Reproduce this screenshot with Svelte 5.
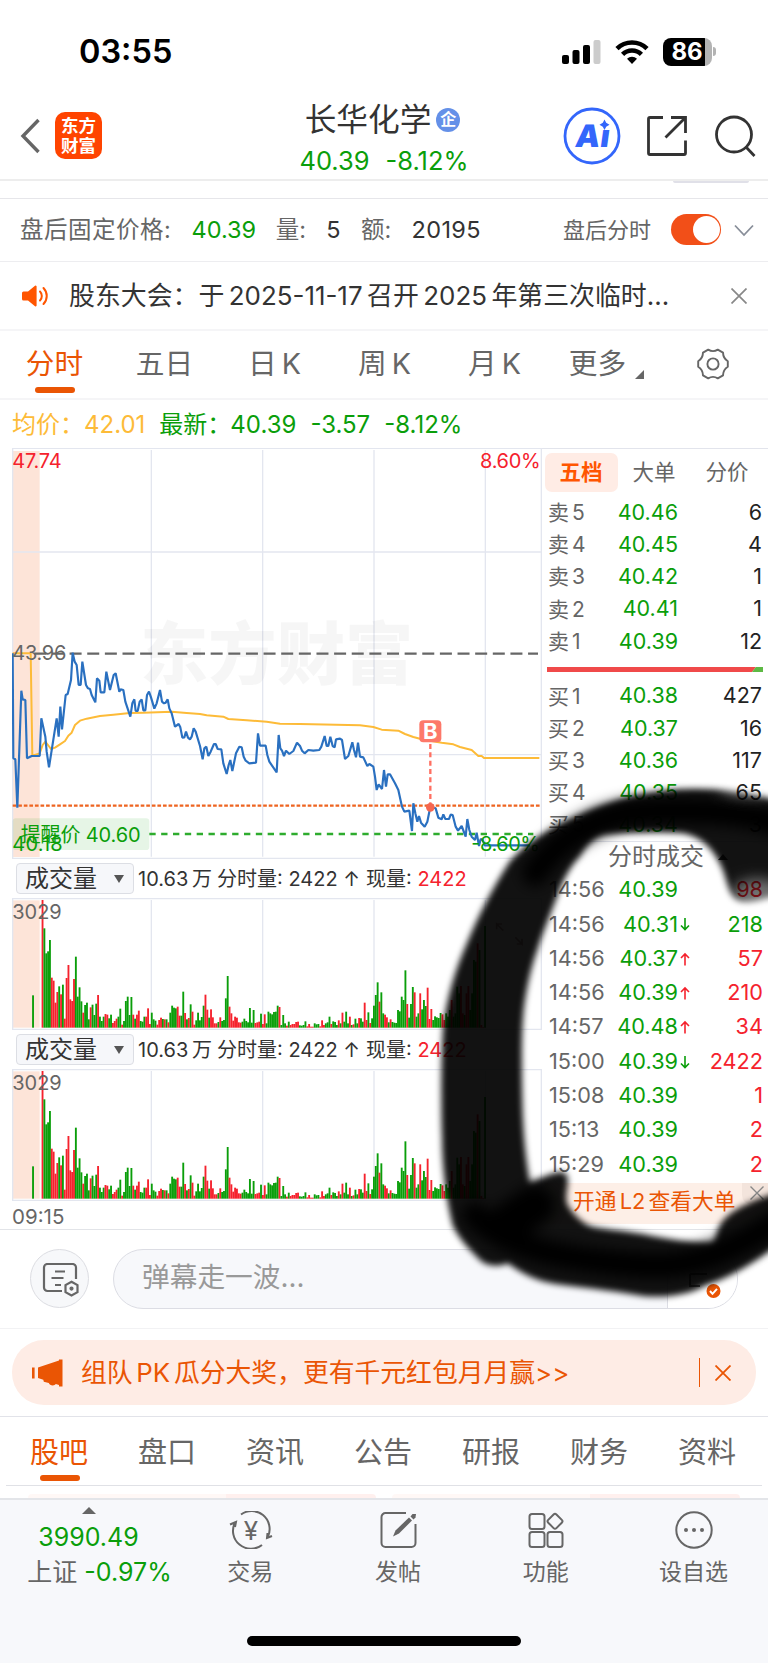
<script lang="ts">
  type Point = [number, number];

  const periods = ['分时', '五日', '日 K', '周 K', '月 K'];
  const sections = ['股吧', '盘口', '资讯', '公告', '研报', '财务', '资料'];

  const asks = [
    { name: '卖 5', price: '40.46', qty: 6 },
    { name: '卖 4', price: '40.45', qty: 4 },
    { name: '卖 3', price: '40.42', qty: 1 },
    { name: '卖 2', price: '40.41', qty: 1 },
    { name: '卖 1', price: '40.39', qty: 12 },
  ];

  const bids = [
    { name: '买 1', price: '40.38', qty: 427 },
    { name: '买 2', price: '40.37', qty: 16 },
    { name: '买 3', price: '40.36', qty: 117 },
    { name: '买 4', price: '40.35', qty: 65 },
    { name: '买 5', price: '40.34', qty: 3 },
  ];

  const trades = [
    { time: '14:56', price: '40.39', dir: '', qty: 98, color: 'red' },
    { time: '14:56', price: '40.31', dir: 'down', qty: 218, color: 'green' },
    { time: '14:56', price: '40.37', dir: 'up', qty: 57, color: 'red' },
    { time: '14:56', price: '40.39', dir: 'up', qty: 210, color: 'red' },
    { time: '14:57', price: '40.48', dir: 'up', qty: 34, color: 'red' },
    { time: '15:00', price: '40.39', dir: 'down', qty: 2422, color: 'red' },
    { time: '15:08', price: '40.39', dir: '', qty: 1, color: 'red' },
    { time: '15:13', price: '40.39', dir: '', qty: 2, color: 'red' },
    { time: '15:29', price: '40.39', dir: '', qty: 2, color: 'red' },
  ];

  // chart units are thirds of a css pixel
  const priceMorning =
    '38,40 40,355 46,358 52,503 64,152 68,178 76,180 81,355 95,348 119,348 124,235 136,290 140,335 147,382 170,235 176,290 181,200 186,268 197,165 203,162 213,120 218,38 224,65 230,75 236,135 242,135 247,65 258,135 264,145 270,147 275,165 286,187 291,115 298,122 302,157 313,157 319,95 330,150 341,105 347,100 358,155 362,148 370,150 376,185 391,230 397,190 403,178 407,213 413,213 419,185 425,178 430,211 436,211 441,165 447,155 453,172 463,206 470,190 480,150 486,185 492,190 497,188 503,178 508,205 515,220 525,260 536,252 541,262 547,293 553,292 558,275 564,293 570,298 575,290 581,265 587,275 600,318 608,358 613,325 619,320 625,348 632,335 642,312 647,312 653,327 664,328 670,370 680,402 686,375 691,360 697,393 708,340 718,320 725,322 731,350 737,362 748,370 768,368 774,280 780,317 797,317 802,345 808,365 830,397 836,285 841,325';
  const priceAfternoon =
    '6,332 12,348 18,332 28,342 40,333 51,308 60,318 66,332 74,340 85,330 100,332 118,330 124,320 134,288 140,318 145,318 151,290 158,318 164,322 168,298 180,296 186,300 195,357 205,348 217,307 222,330 228,352 234,308 240,350 250,352 262,378 268,372 280,380 285,410 290,450 296,433 306,447 312,390 318,440 323,403 330,403 345,430 355,450 366,500 373,515 388,512 396,573 400,490 406,520 412,545 417,528 423,548 434,560 442,545 451,500 467,505 475,533 485,538 490,523 496,537 507,537 512,524 518,525 527,560 534,572 545,558 557,590 562,537 568,570 575,590 585,600 590,578 597,618 602,597 608,600 614,616 750,616';
  const averageMorning =
    '38,40 92,40 97,347 119,340 128,315 136,305 144,315 153,327 165,323 180,313 195,303 205,287 215,278 225,255 240,242 260,236 300,228 340,224 390,219 430,218 515,215 560,219 600,222 620,226 670,230 685,237 740,241 800,245 840,251';
  const averageAfternoon =
    '60,252 240,256 280,261 305,269 355,272 375,282 400,291 420,296 450,302 485,308 520,313 540,321 575,330 595,348 605,348 612,354 778,354';

  function parse(points: string, shift: number): Point[] {
    return points.split(' ').map((p) => {
      const [x, y] = p.split(',').map(Number);
      return [x + shift, y] as Point;
    });
  }

  function join(morning: string, afternoon: string) {
    return [...parse(morning, 0), ...parse(afternoon, 840)].map((p) => p.join(',')).join(' ');
  }

  const priceLine = join(priceMorning, priceAfternoon);
  const averageLine = join(averageMorning, averageAfternoon);

  // r = up minute, g = down minute, number = top of the bar
  const volumeMorning =
    'r150 g235 g310 g304 g270 r383 r392 r458 r426 g409 r433 g404 r506 r384 r345 r448 r453 r387 g320 g440 g412 g454 r488 g465 g458 g508 r472 g464 g495 g461 r435 g500 g513 g500 r492 r494 g505 g494 r519 r513 r506 g500 g476 r524 g513 g453 g440 g495 g441 r494 g506 r494 r482 g513 g515 g500 r500 r475 r522 g488 g508 g512 r524 r510 r503 g507 r508 g508 r517 g488 g467 g473 g475 r470 r497 g497 g425 r489 g508 r504 g463 r485 r524 g511 g488 g511 g501 g467 r434 r479 g503 r478 r502 r520 r520 g516 r502 g513 g510 g445 g378 r470 r490 r512 r500 r503 r517 r518 g515 g506 g513 g517 g474 g518 g480 r519 r517 r515 g491 r522 r493 g520 g485 g490 g493 g486 g485 g467 r471';
  const volumeAfternoon =
    'g525 g495 g520 r527 g515 r525 r522 r522 r516 r515 g526 g527 g525 g514 r529 r522 r530 r530 g520 g523 g522 r529 r511 r525 g520 g517 g500 r522 g514 g516 g525 r511 g520 r488 g515 g485 g520 r500 g525 r523 g506 g520 r504 g505 g515 r458 r510 g487 r519 g505 g467 g435 g397 r455 g427 g490 r494 r502 g517 r508 g516 g518 g519 g480 g484 g440 g450 g361 r462 g503 g462 g411 r427 g500 g490 r430 g478 g450 g468 r413 r507 r477 g510 g499 g502 g504 g489 r493 r510 g490 g500 g480 r450 g500 g490 g410 g430 r408 r490 g495 r430 r408 g480 g430 g330 g335 r280 g300 r525 r531 g228';

  function bars(values: string, start: number, end: number) {
    const list = values.split(' ');
    const step = (end - start) / (list.length - 1);
    return list.map((v, i) => ({
      x: start + i * step,
      top: Number(v.slice(1)),
      color: v[0] === 'r' ? '#f5222d' : '#0a9e0a',
    }));
  }

  const volume = [
    { x: 99, top: 436, color: '#0a9e0a' },
    ...bars(volumeMorning, 127.5, 838.5),
    ...bars(volumeAfternoon, 844, 1455),
  ];
</script>

<div class="phone">
  <header class="status">
    <span class="clock">03:55</span>
    <div class="status-icons">
      <svg width="39" height="24" viewBox="0 0 39 24">
        <rect x="0" y="15" width="7" height="9" rx="2" />
        <rect x="10.5" y="10" width="7" height="14" rx="2" />
        <rect x="21" y="5" width="7" height="19" rx="2" />
        <rect x="31.5" y="0" width="7" height="24" rx="2" fill="#ccc" />
      </svg>
      <svg width="34" height="24" viewBox="0 0 34 24" fill="none" stroke="#000" stroke-width="4.6">
        <path d="M2 8.6a21.5 21.5 0 0 1 30 0" />
        <path d="M7.6 14.4a13.4 13.4 0 0 1 18.8 0" />
        <path d="M17 24l-5-5.2a7.3 7.3 0 0 1 10 0z" fill="#000" stroke="none" />
      </svg>
      <div class="battery"><span>86</span><i></i></div>
    </div>
  </header>

  <div class="titlebar">
    <div class="left">
      <svg width="21" height="36" viewBox="0 0 21 36" fill="none" stroke="#666" stroke-width="3.4">
        <path d="M18.5 2L3 18l15.500 16" />
      </svg>
      <div class="logo"><span>东方</span><span>财富</span></div>
    </div>
    <div class="title">
      <div class="name">长华化学<span class="badge">企</span></div>
      <div class="quote"><span>40.39</span><span>-8.12%</span></div>
    </div>
    <div class="actions">
      <svg class="ai" width="58" height="58" viewBox="0 0 58 58">
        <circle cx="29" cy="29" r="27" fill="#fff" stroke="#3366fb" stroke-width="2.800" />
        <text x="17" y="40.500" transform="skewX(-8)" fill="#3366fb">A</text>
        <text x="42" y="40.500" transform="skewX(-8)" fill="#3366fb">ı</text>
        <path d="M41.500 12.500l1.700 3.200 3.300 2-3.300 2-1.700 3.200-1.700-3.200-3.300-2 3.300-2z" fill="#3366fb" />
      </svg>
      <svg width="42" height="42" viewBox="0 0 42 42" fill="none" stroke="#333" stroke-width="2.800">
        <path d="M17 2.500H4a1.500 1.500 0 0 0-1.500 1.500v34a1.500 1.500 0 0 0 1.500 1.500h34a1.500 1.500 0 0 0 1.500-1.500V25.500" />
        <path d="M25 2.500h14.500V18M39 3L19.500 22.500" />
      </svg>
      <svg width="42" height="42" viewBox="0 0 42 42" fill="none" stroke="#333" stroke-width="2.800">
        <circle cx="20" cy="19.500" r="17.500" />
        <path d="M31.500 31.500l9 9.500" />
      </svg>
    </div>
  </div>

  <div class="sliver"><i></i></div>

  <div class="post-market">
    <span class="label w-fixed">盘后固定价格:</span>
    <b class="green">40.39</b>
    <span class="label">量:</span>
    <b>5</b>
    <span class="label">额:</span>
    <b>20195</b>
    <span class="switch-label">盘后分时</span>
    <span class="toggle"><i></i></span>
    <svg width="20" height="13" viewBox="0 0 20 13" fill="none" stroke="#888e99" stroke-width="1.800">
      <path d="M1 1.500l9 9.500 9-9.500" />
    </svg>
  </div>

  <div class="notice">
    <svg width="28" height="24" viewBox="0 0 28 24">
      <path d="M1.500 7.500h4.500L13 1.800a1 1 0 0 1 1.600.8v18.800a1 1 0 0 1-1.600.8L6 16.500H1.500A1.500 1.500 0 0 1 0 15V9a1.500 1.500 0 0 1 1.500-1.500z" fill="#ff5500" />
      <path d="M18 7.500a6.500 6.500 0 0 1 0 9M21.500 4a11.500 11.500 0 0 1 0 16" fill="none" stroke="#ff5500" stroke-width="2" stroke-linecap="round" />
    </svg>
    <p>股东大会：于 2025-11-17 召开 2025 年第三次临时...</p>
    <svg width="16" height="16" viewBox="0 0 16 16" stroke="#888" stroke-width="1.700">
      <path d="M0.500 0.500l15 15M15.500 0.500l-15 15" />
    </svg>
  </div>

  <nav class="periods">
    {#each periods as period, i}
      <span class="period" class:active={i === 0}>{period}</span>
    {/each}
    <span class="period more">更多<i></i></span>
    <svg class="gear" width="34" height="34" viewBox="0 0 34 34" fill="none" stroke="#666" stroke-width="1.900">
      <path d="M12.200 2.600Q17 5.600 21.800 2.600L27 5.600Q27.200 11.300 31.800 14.200V19.800Q27.200 22.700 27 28.400L21.800 31.400Q17 28.400 12.200 31.400L7 28.400Q6.800 22.700 2.200 19.800V14.200Q6.800 11.300 7 5.600Z" stroke-linejoin="round" />
      <circle cx="17" cy="17" r="5.600" />
    </svg>
  </nav>

  <div class="summary">
    <span class="avg">均价：<b>42.01</b></span>
    <span class="last">最新：<b>40.39</b></span>
    <span>-3.57</span>
    <span>-8.12%</span>
  </div>

  <main class="board">
    <section class="charts">
      <svg class="price-chart" width="530" height="411" viewBox="36 -576 1590 1233">
        <rect x="36" y="-567" width="83" height="1218" fill="#fde4d8" />
        <g stroke="#e3e6ef" stroke-width="4" fill="none">
          <path d="M36 -575H1626M38 -575V657M1624 -575V657M36 655H1626" />
          <path d="M454 -570V650M788 -570V650M1122 -570V650M1456 -570V650" />
          <path d="M36 -264H1624M119 344H1624" />
        </g>
        <text class="watermark" x="420" y="118" textLength="820" lengthAdjust="spacingAndGlyphs">东方财富</text>
        <path d="M103 41H1614" stroke="#666" stroke-width="7" stroke-dasharray="36 16.900" />
        <path d="M38 497H1624" stroke="#ee6420" stroke-width="7" stroke-dasharray="11 5.700" />
        <rect x="38" y="535" width="410" height="95" rx="10" fill="#0a9e0a" opacity="0.100" />
        <path d="M448 582H1600" stroke="#2eac2e" stroke-width="7" stroke-dasharray="19 16.500" />
        <polyline points={averageLine} fill="none" stroke="#fdbb38" stroke-width="6" stroke-linejoin="round" />
        <polyline points={priceLine} fill="none" stroke="#2a70c0" stroke-width="6.500" stroke-linejoin="bevel" />
        <text x="37" y="-516" class="axis up" textLength="148">47.74</text>
        <text x="1622" y="-516" class="axis up" text-anchor="end" textLength="182">8.60%</text>
        <text x="37" y="60" class="axis" textLength="162">43.96</text>
        <text x="62" y="605" class="axis down" textLength="360">提醒价 40.60</text>
        <text x="37" y="634" class="axis down" textLength="151">40.18</text>
        <text x="1414" y="634" class="axis down" textLength="206">-8.60%</text>
        <path d="M1291 312V492" stroke="#ff6f61" stroke-width="7" stroke-dasharray="15 10" />
        <circle cx="1291" cy="502" r="13" fill="#f56650" />
        <rect x="1258" y="241" width="66" height="66" rx="12" fill="#fd7869" />
        <text x="1291" y="297" class="buy" text-anchor="middle">B</text>
      </svg>

      {#each [0, 1] as pane}
        <div class="pane-head">
          <span class="select">成交量<i></i></span>
          <span class="total">10.63 万</span>
          <span class="minute">分时量: 2422 <em>↑</em></span>
          <span class="now">现量: <b class="red">2422</b></span>
        </div>
        <svg class="volume" width="530" height="132" viewBox="36 144 1590 396">
          <rect x="36" y="151" width="83" height="382" fill="#fde4d8" />
          <path d="M36 146H1626M38 144V540M1624 144V540M36 538H1626M454 150V533M788 150V533M1122 150V533M1456 150V533" stroke="#e3e6ef" stroke-width="4" />
          {#each volume as bar}
            <rect x={bar.x - 2.700} y={bar.top} width="5.600" height={533 - bar.top} fill={bar.color} />
          {/each}
          <text x="37" y="208" class="axis" textLength="148">3029</text>
          {#if pane === 0}
            <path d="M1510 242l-20-20v16m0-16h16M1546 262l20 20v-16m0 16h-16" stroke="#b99" stroke-width="5" fill="none" />
          {/if}
        </svg>
      {/each}
      <div class="start-time">09:15</div>
    </section>

    <aside class="depth">
      <div class="depth-tabs">
        <span class="depth-tab active">五档</span>
        <span class="depth-tab">大单</span>
        <span class="depth-tab">分价</span>
      </div>
      <div class="levels">
        {#each asks as row}
          <div class="level"><span>{row.name}</span><b>{row.price}</b><em>{row.qty}</em></div>
        {/each}
      </div>
      <svg class="ratio" width="216" height="5" viewBox="0 0 216 5">
        <path d="M0 0H209L205 5H0z" fill="#f04a4a" />
        <path d="M209 0H216V5H205z" fill="#5db944" />
      </svg>
      <div class="levels">
        {#each bids as row}
          <div class="level"><span>{row.name}</span><b>{row.price}</b><em>{row.qty}</em></div>
        {/each}
      </div>
      <div class="trades-head">分时成交<i></i></div>
      <div class="trades">
        {#each trades as trade}
          <div class="trade">
            <span>{trade.time}</span>
            <b>{trade.price}</b>
            <svg width="12" height="14" viewBox="0 0 12 14" fill="none" stroke={trade.dir === 'up' ? '#f5222d' : '#0a9e0a'} stroke-width="1.600">
              {#if trade.dir === 'up'}
                <path d="M6 13.500V2M2 6L6 2 10 6" />
              {:else if trade.dir === 'down'}
                <path d="M6 1V12.500M2 8.500L6 12.500 10 8.500" />
              {/if}
            </svg>
            <em class={trade.color}>{trade.qty}</em>
          </div>
        {/each}
      </div>
      <div class="level-two">
        <span>开通 L2 查看大单</span>
        <div class="dismiss">
          <svg width="14" height="14" viewBox="0 0 14 14" stroke="#888" stroke-width="1.400">
            <path d="M0.500 0.500l13 13M13.500 0.500l-13 13" />
          </svg>
        </div>
      </div>
    </aside>
  </main>

  <div class="danmu">
    <div class="danmu-settings">
      <svg width="38" height="34" viewBox="0 0 38 34" fill="none" stroke="#666" stroke-width="2.200">
        <path d="M20 28H5.500A3.500 3.500 0 0 1 2 24.500v-20A3.500 3.500 0 0 1 5.500 1h25A3.500 3.500 0 0 1 34 4.500V16" />
        <path d="M13 8.500h10M9.500 15h12M13 22h6" />
        <path d="M29.500 18.700l6 3.400v7l-6 3.400-6-3.400v-7z" />
        <circle cx="29.500" cy="25.600" r="1.500" fill="#666" stroke-width="1.200" />
      </svg>
    </div>
    <div class="danmu-input">
      <span class="placeholder">弹幕走一波...</span>
      <div class="danmu-switch">
        <svg width="36" height="28" viewBox="0 0 36 28">
          <path d="M5 2H22M5 2V14H15" fill="none" stroke="#666" stroke-width="2" />
          <circle cx="28.500" cy="19" r="7" fill="#ea5504" />
          <path d="M25 19l2.500 2.800 4.500-5" fill="none" stroke="#fff" stroke-width="2" />
        </svg>
      </div>
    </div>
  </div>

  <div class="promo-wrap">
    <div class="promo">
      <svg width="31" height="28" viewBox="0 0 31 28" fill="#ea5504">
        <path d="M0 8.500h2.600v11H0z" />
        <path d="M6 8.500L27 1.500V0.500h3.500v27H27V26l-3.200-.9c-1.200 2.200-6.400 1.800-7-1.100l-5-1.300-.5-2L6 19z" />
      </svg>
      <span class="promo-text">组队 PK 瓜分大奖，更有千元红包月月赢&gt;&gt;</span>
      <i></i>
      <svg width="16" height="16" viewBox="0 0 16 16" stroke="#ea5504" stroke-width="1.800">
        <path d="M0.500 0.500l15 15M15.500 0.500l-15 15" />
      </svg>
    </div>
  </div>

  <nav class="sections">
    {#each sections as section, i}
      <span class="section" class:active={i === 0}>{section}</span>
    {/each}
  </nav>
  <div class="cards-peek"><i></i><i></i></div>

  <footer class="toolbar">
    <div class="tools">
      <div class="index">
        <i></i>
        <div class="points">3990.49</div>
        <div class="change">上证 <b>-0.97%</b></div>
      </div>
      <div class="tool">
        <svg width="44" height="38" viewBox="0 0 44 38" fill="none" stroke="#666" stroke-width="2">
          <path d="M12 3.500A18 18 0 0 1 39 25.500M43 25l-5 2 .5-5" />
          <path d="M33 34A18 18 0 0 1 6 11.500M1 13.500l6-2.500-1 5" />
          <text class="yuan" x="22" y="28.500" text-anchor="middle">¥</text>
        </svg>
        <span>交易</span>
      </div>
      <div class="tool">
        <svg width="44" height="38" viewBox="0 0 44 38" fill="none" stroke="#666" stroke-width="2">
          <path d="M29 2H8.500A4 4 0 0 0 4.500 6v26a4 4 0 0 0 4 4h26a4 4 0 0 0 4-4V13" />
          <path d="M16 25.500l2.500-6L32 6.500l3 3L22 22.500z" fill="#666" stroke="none" />
          <path d="M33.500 5.500l2-2.500 3.500 0-.5 3.500-2 2z" fill="#666" stroke="none" />
        </svg>
        <span>发帖</span>
      </div>
      <div class="tool">
        <svg width="44" height="38" viewBox="0 0 44 38" fill="none" stroke="#666" stroke-width="2">
          <rect x="5.500" y="3" width="15" height="15" rx="2.500" />
          <rect x="5.500" y="21" width="15" height="15" rx="2.500" />
          <rect x="23.500" y="21" width="15" height="15" rx="2.500" />
          <rect x="25.200" y="4.500" width="11.600" height="11.600" rx="2" transform="rotate(45 31 10.300)" />
        </svg>
        <span>功能</span>
      </div>
      <div class="tool">
        <svg width="44" height="38" viewBox="0 0 44 38" fill="none" stroke="#666" stroke-width="2">
          <circle cx="22" cy="19" r="17.700" />
          <g fill="#666" stroke="none"><circle cx="14" cy="19" r="2" /><circle cx="22" cy="19" r="2" /><circle cx="30" cy="19" r="2" /></g>
        </svg>
        <span>设自选</span>
      </div>
    </div>
    <div class="home-bar"></div>
  </footer>

  <!-- hand-drawn marker ring around the trade list -->
  <svg class="marker" width="348" height="540" viewBox="420 770 348 540">
    <defs>
      <filter id="soft" x="-10%" y="-10%" width="120%" height="120%"><feGaussianBlur stdDeviation="3.200" /></filter>
      <filter id="softer" x="-20%" y="-20%" width="140%" height="140%"><feGaussianBlur stdDeviation="7" /></filter>
      <mask id="thin" maskUnits="userSpaceOnUse" x="400" y="750" width="400" height="580">
        <rect x="400" y="750" width="400" height="580" fill="#fff" />
        <g filter="url(#softer)">
          <ellipse cx="758" cy="893" rx="26" ry="14" fill="#999" />
          <ellipse cx="750" cy="786" rx="30" ry="9" fill="#777" />
        </g>
      </mask>
    </defs>
    <g mask="url(#thin)">
      <path
        filter="url(#soft)"
        fill="#000"
        fill-opacity="0.930"
        d="M790 806C750 787 690 787 663 791C620 797 595 808 577 817C555 826 530 839 510 861C490 892 478 917 467 943C455 970 446 1000 443 1030C441 1060 441 1110 442 1137C442 1165 446 1200 453 1226C460 1240 468 1248 480 1260C487 1267 500 1267 508 1263C530 1280 548 1283 563 1285C590 1288 620 1292 643 1296C665 1298 690 1295 706 1285C728 1278 750 1266 790 1236V1188C765 1197 735 1205 722 1222C716 1229 717 1239 713 1243C690 1243 660 1238 643 1234C620 1230 600 1229 590 1226C578 1220 572 1212 567 1204C564 1195 570 1182 567 1176C564 1169 556 1171 530 1183C526 1160 524 1140 523 1119C522 1095 521 1040 523 1019C524 1000 530 970 537 951C542 935 548 920 557 897C562 882 570 866 580 856C586 846 592 837 604 834C630 832 660 831 683 833C700 837 712 846 722 868C728 882 728 898 741 901C755 903 765 897 790 893Z"
      />
      <g filter="url(#softer)" fill="none" stroke="#000" stroke-width="26" stroke-linecap="round">
        <path d="M780 824C740 809 670 809 630 813C590 819 555 843 535 873" />
        <path d="M475 1215C500 1245 560 1260 640 1265C690 1270 730 1252 780 1220" />
        <path d="M505 1225L535 1205" stroke-width="40" />
      </g>
    </g>
  </svg>
</div>

<style>
  :global(body) {
    margin: 0;
    background: #fff;
  }

  .phone {
    position: relative;
    width: 768px;
    height: 1663px;
    display: flex;
    flex-direction: column;
    overflow: hidden;
    background: #fff;
    color: #333;
    font-family: Inter, 'Noto Sans CJK SC', sans-serif;
    font-size: 24px;
    line-height: 1;
    white-space: nowrap;
  }

  .phone * {
    box-sizing: border-box;
    flex-shrink: 0;
  }

  b,
  em {
    font-weight: 400;
    font-style: normal;
  }

  svg {
    display: block;
  }

  .green {
    color: #0a9e0a;
  }

  .red {
    color: #f5222d;
  }

  .status {
    height: 96px;
    padding: 7px 52px 0 79px;
    display: flex;
    align-items: center;
    justify-content: space-between;
    color: #000;
  }

  .clock {
    padding-top: 1px;
    font-size: 32.500px;
    font-weight: 600;
  }

  .status-icons {
    display: flex;
    align-items: center;
    gap: 14px;
  }

  .battery {
    display: flex;
    align-items: center;
  }

  .battery span {
    width: 49px;
    height: 28px;
    border-radius: 8px;
    background: linear-gradient(90deg, #000 42px, #b3b3b3 42px);
    color: #fff;
    font-size: 24px;
    font-weight: 700;
    line-height: 28px;
    text-align: center;
    padding-right: 1px;
  }

  .battery i {
    width: 3px;
    height: 9px;
    margin-left: 1px;
    border-radius: 0 3px 3px 0;
    background: #b3b3b3;
  }

  .titlebar {
    height: 85px;
    border-bottom: 2px solid #ededed;
    display: grid;
    grid-template-columns: 240px 288px 240px;
  }

  .left {
    display: flex;
    align-items: center;
    gap: 14px;
    padding: 0 0 3px 20px;
  }

  .logo {
    width: 47px;
    height: 47px;
    margin-top: -1px;
    border-radius: 10px;
    background: #ff4400;
    color: #fff;
    font-size: 17.500px;
    font-weight: 700;
    line-height: 20px;
    display: flex;
    flex-direction: column;
    align-items: center;
    justify-content: center;
  }

  .title {
    display: flex;
    flex-direction: column;
    align-items: center;
  }

  .name {
    display: flex;
    align-items: center;
    height: 48px;
    gap: 5px;
    padding-right: 3px;
    font-size: 31.700px;
  }

  .badge {
    width: 24px;
    height: 24px;
    border-radius: 50%;
    background: #6490e8;
    color: #fff;
    font-size: 16px;
    font-weight: 700;
    line-height: 23px;
    text-align: center;
  }

  .quote {
    display: flex;
    gap: 16px;
    height: 34px;
    align-items: center;
    color: #0a9e0a;
    font-size: 25.500px;
  }

  .actions {
    display: flex;
    align-items: center;
    padding: 0 0 3px 35px;
    gap: 25px;
  }

  .actions svg:last-child {
    margin-left: 1px;
  }

  .ai text {
    font-size: 31px;
    font-weight: 900;
  }

  .sliver {
    height: 18px;
    border-bottom: 1px solid #e6e6ea;
    padding-left: 673px;
  }

  .sliver i {
    display: block;
    width: 76px;
    height: 2px;
    border-radius: 0 0 4px 4px;
    background: #e0e0e8;
  }

  .post-market {
    height: 63px;
    border-bottom: 1px solid #ededf0;
    padding: 0 14px 0 20px;
    display: flex;
    align-items: center;
    gap: 20.500px;
    font-size: 23.500px;
  }

  .post-market .label {
    color: #666;
    width: 30px;
  }

  .post-market .w-fixed {
    width: 151px;
    letter-spacing: 0.500px;
  }

  .post-market .green + .label {
    margin-left: -1px;
  }

  .post-market b:last-of-type {
    letter-spacing: 0.400px;
  }

  .switch-label {
    margin-left: auto;
    color: #666;
    font-size: 22px;
  }

  .toggle {
    width: 50px;
    height: 31px;
    margin: -2px 0 0 -1px;
    padding: 2px 1px;
    border-radius: 16px;
    background: #f24f18;
    display: flex;
    justify-content: flex-end;
  }

  .toggle i {
    width: 27px;
    height: 27px;
    border-radius: 50%;
    background: #fff;
  }

  .post-market svg {
    margin-left: -7px;
  }

  .notice {
    height: 69px;
    border-bottom: 2px solid #f5f5f7;
    padding: 0 20px 0 22px;
    display: flex;
    align-items: center;
  }

  .notice p {
    margin: 0 0 0 19px;
    width: 662px;
    font-size: 25.900px;
    word-spacing: -2.800px;
  }

  .periods {
    height: 69px;
    border-bottom: 2px solid #f5f5f7;
    display: flex;
    align-items: center;
    color: #666;
    font-size: 28.700px;
    word-spacing: -3px;
  }

  .period {
    width: 110px;
    height: 67px;
    display: flex;
    align-items: center;
    justify-content: center;
    padding-right: 1px;
  }

  .active {
    position: relative;
    color: #ea5504;
  }

  .period.active::after,
  .section.active::after {
    content: '';
    position: absolute;
    bottom: 5px;
    left: 35px;
    width: 40px;
    height: 6px;
    border-radius: 3px;
    background: #ea5504;
  }

  .more {
    gap: 9px;
    padding-left: 4px;
  }

  .more i {
    margin-top: 20px;
    border-left: 9px solid transparent;
    border-bottom: 9px solid #666;
  }

  .gear {
    margin: -2px 0 0 36px;
  }

  .summary {
    height: 48px;
    padding: 1px 0 0 12px;
    display: flex;
    align-items: center;
    gap: 14px;
    color: #0a9e0a;
    font-size: 24px;
  }

  .avg {
    color: #fdbb38;
  }

  .last b {
    margin-left: -1px;
  }

  .board {
    height: 782px;
    border-bottom: 1px solid #e2e4e8;
    display: grid;
    grid-template-columns: 542px 226px;
  }

  .charts {
    padding-left: 12px;
  }

  .axis {
    font-size: 60px;
    fill: #666;
  }

  .axis.up {
    fill: #f5222d;
  }

  .axis.down {
    fill: #0a9e0a;
  }

  .watermark {
    font-size: 206px;
    font-weight: 900;
    fill: #000;
    opacity: 0.030;
  }

  .buy {
    font-size: 66px;
    font-weight: 700;
    fill: #fff;
  }

  .pane-head {
    height: 39px;
    display: flex;
    align-items: center;
    padding-left: 4px;
    font-size: 20px;
  }

  .select {
    width: 118px;
    height: 31px;
    border: 1px solid #dcdee4;
    border-radius: 4px;
    background: #f6f7fa;
    display: flex;
    align-items: center;
    padding-left: 8px;
    gap: 17px;
    font-size: 24px;
  }

  .select i {
    border: 5px solid transparent;
    border-top: 8px solid #555;
    border-bottom: 0;
  }

  .total {
    width: 79px;
    margin-left: 4px;
    word-spacing: -2px;
  }

  .minute {
    width: 149px;
  }

  .start-time {
    height: 29px;
    line-height: 31px;
    color: #666;
    font-size: 20.500px;
  }

  .depth {
    padding-left: 3px;
    border-top: 1px solid #e2e4ec;
  }

  .depth-tabs {
    display: flex;
    height: 47.500px;
    padding-top: 4px;
    font-size: 21.500px;
    color: #666;
  }

  .depth-tab {
    width: 73px;
    height: 39px;
    line-height: 38px;
    text-align: center;
    padding-right: 1px;
  }

  .depth-tab.active {
    border-radius: 7px;
    background: #ffece5;
    color: #ff5500;
    font-weight: 700;
  }

  .levels {
    height: 161px;
  }

  .level {
    height: 32.200px;
    display: grid;
    grid-template-columns: 50px 83px 81px;
    align-items: center;
    padding-left: 3px;
    color: #666;
    font-size: 21px;
    word-spacing: -3px;
  }

  .level b {
    color: #0a9e0a;
    font-size: 21.500px;
    text-align: right;
    padding-right: 3px;
  }

  .level em {
    color: #222;
    font-size: 21.500px;
    text-align: right;
  }

  .ratio {
    margin: 9.500px 0 8px 2px;
  }

  .trades-head {
    height: 32px;
    border-top: 1px solid #e2e4ec;
    display: flex;
    align-items: center;
    padding: 0 0 1px 63px;
    gap: 14px;
    color: #666;
    font-size: 24px;
  }

  .trades-head i {
    border: 5px solid transparent;
    border-bottom: 6px solid #333;
    border-top: 0;
  }

  .trades {
    padding-bottom: 1px;
  }

  .trade {
    height: 34.300px;
    display: grid;
    grid-template-columns: 60px 70px 12px 1fr;
    align-items: center;
    padding: 0 5px 0 4px;
    color: #666;
    font-size: 21.700px;
  }

  .trade b {
    color: #0a9e0a;
    text-align: right;
    padding-right: 1px;
  }

  .trade em {
    text-align: right;
  }

  .level-two {
    height: 41px;
    display: flex;
    padding-left: 28px;
    background: #fdefe7;
    color: #ea5504;
    font-size: 21.800px;
    line-height: 37px;
    word-spacing: -3px;
  }

  .dismiss {
    margin-left: auto;
    width: 26px;
    height: 22px;
    padding: 3px 0 0 8px;
    background: #f3e4dc;
    border-radius: 0 0 0 10px;
  }

  .danmu {
    height: 99px;
    border-bottom: 1px solid #f2f2f4;
    display: flex;
    align-items: center;
    padding: 0 30px 1px;
    gap: 24px;
  }

  .danmu-settings {
    width: 59px;
    height: 59px;
    border: 1px solid #dcdde2;
    border-radius: 50%;
    background: #f7f8fa;
    display: flex;
    align-items: center;
    justify-content: center;
    padding: 2px 0 0 2px;
  }

  .danmu-input {
    width: 625px;
    height: 60px;
    border: 1px solid #dcdde4;
    border-radius: 30px;
    background: #f7f8fb;
    display: flex;
    justify-content: space-between;
    overflow: hidden;
  }

  .placeholder {
    padding-left: 28px;
    color: #999;
    font-size: 27.700px;
    line-height: 54px;
  }

  .danmu-switch {
    width: 70px;
    border-left: 1px solid #dcdde4;
    background: #fff;
    padding: 22px 0 0 17px;
  }

  .promo-wrap {
    height: 88px;
    padding: 11px 12px;
    border-bottom: 1px solid #e2e3e9;
  }

  .promo {
    height: 65px;
    border-radius: 32px;
    background: #feece5;
    color: #ea5504;
    display: flex;
    align-items: center;
    padding: 0 25px 0 20px;
    font-size: 25.800px;
  }

  .promo-text {
    margin-left: 18px;
    word-spacing: -3.500px;
  }

  .promo i {
    width: 1px;
    height: 29px;
    margin: 0 15px 0 auto;
    background: #ea5504;
  }

  .sections {
    height: 69px;
    margin: 0 6px;
    border-bottom: 1px solid #e0e1e6;
    display: flex;
    color: #666;
    font-size: 29px;
  }

  .section {
    width: 108px;
    line-height: 71px;
    padding-right: 2px;
    text-align: center;
  }

  .section.active::after {
    bottom: 4px;
    left: 34px;
  }

  .cards-peek {
    height: 12px;
    padding: 8px 28px 0;
    display: flex;
    gap: 16px;
  }

  .cards-peek i {
    width: 348px;
    height: 4px;
    border-radius: 8px 8px 0 0;
    background: linear-gradient(90deg, #fff8f6 57%, #fff0ee 57%);
  }

  .toolbar {
    height: 165px;
    border-top: 2px solid #e3e5e9;
    background: #f7f8fb;
    display: flex;
    flex-direction: column;
    align-items: center;
    justify-content: space-between;
    padding-bottom: 17px;
  }

  .tools {
    width: 768px;
    display: grid;
    grid-template-columns: 177px repeat(4, 147.700px);
    color: #666;
  }

  .index {
    display: flex;
    flex-direction: column;
    align-items: center;
    padding-top: 7px;
    font-size: 25px;
  }

  .index i {
    border: 7px solid transparent;
    border-bottom: 7px solid #666;
    border-top: 0;
  }

  .points {
    margin-top: 11px;
  }

  .points,
  .change b {
    color: #0a9e0a;
  }

  .change {
    margin: 10px 0 0 22px;
  }

  .tool {
    display: flex;
    flex-direction: column;
    align-items: center;
    padding-top: 11px;
    gap: 12px;
    font-size: 23px;
  }

  .tool span {
    padding-right: 1px;
  }

  .yuan {
    font-size: 26px;
    fill: #666;
    stroke: none;
  }

  .home-bar {
    width: 274px;
    height: 10px;
    border-radius: 5px;
    background: #000;
  }

  .marker {
    position: absolute;
    left: 420px;
    top: 770px;
  }
</style>
